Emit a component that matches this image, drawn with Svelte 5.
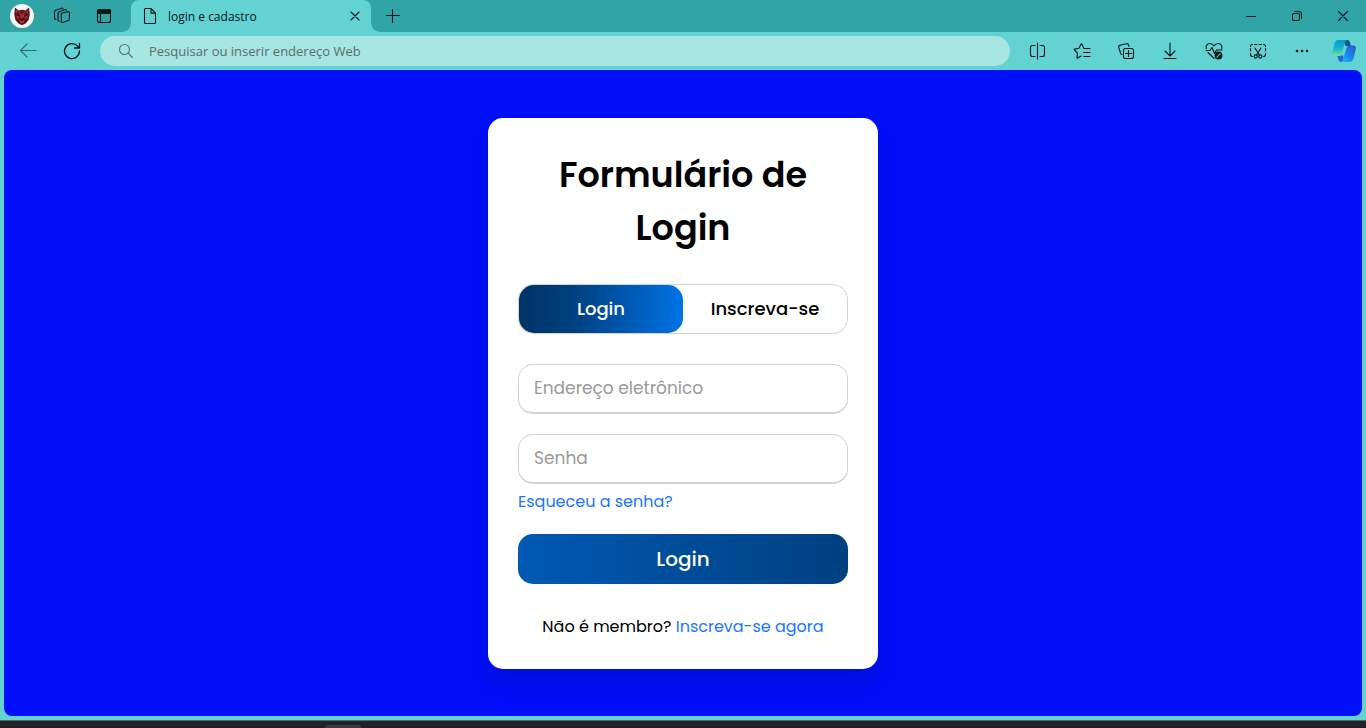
<script>
  let mode = $state('login');
  let address = $state('');
  let email = $state('');
  let password = $state('');
</script>

<div class="browser">
  <header class="titlebar">
    <button class="tool" aria-label="Perfil">
      <svg width="24" height="24" viewBox="0 0 24 24">
        <circle cx="12" cy="12" r="12" fill="#f8f6f5" />
        <path d="M5 3.600 8.600 6.400Q12 5 15.400 6.400L19 3.600 19.800 10.500 18.600 16 15.600 19.400 12 21.200 8.400 19.400 5.400 16 4.200 10.500Z" fill="#5e1a1f" />
        <path d="M6 5.400 8.400 7.600 6.200 9.600ZM18 5.400 15.600 7.600 17.800 9.600ZM9 7.800 12 10.600 15 7.800 14.200 12.400 12 15 9.800 12.400Z" fill="#b3262e" />
        <path d="M6 11.400 9.600 13.200 8 14.400ZM18 11.400 14.400 13.200 16 14.400ZM9.600 16 12 17.400 14.400 16 13.400 19 10.600 19Z" fill="#df2f36" />
        <path d="M10.600 15.200h2.800L12 16.800ZM7 10.400l3 1.600M17 10.400l-3 1.600M9.400 18.600l-2-2.800M14.600 18.600l2-2.800" fill="#17090b" stroke="#17090b" stroke-width=".8" />
      </svg>
    </button>
    <button class="tool" aria-label="Espaços de trabalho">
      <svg class="line" width="18" height="18" viewBox="0 0 18 18">
        <path d="m8.800 6.300 6-1.500q1.600-.3 1.600 1.200v6q0 1.200-1.200 1.500l-5.400 1.900q-1.500.4-1.500-1.100V7.600q0-1 .5-1.300Z" />
        <path d="M6.300 14.200q-1.200 0-1.200-1.300V6.300q0-1.100 1.100-1.600l6-2.200q1-.2 1.400.7" />
        <path d="M3 12.500q-1.500 0-1.500-1.400V5q0-1.200 1.200-1.700L8.600 1.200q1-.3 1.400.5" />
      </svg>
    </button>
    <button class="tool" aria-label="Menu de guias">
      <svg class="line" width="18" height="18" viewBox="0 0 18 18">
        <rect x="2.500" y="2.500" width="13" height="13" rx="2" />
        <path d="M2.500 4q0-1.500 1.500-1.500h10q1.500 0 1.500 1.500v2.500h-13Z" fill="#071718" />
        <path d="M5.500 6v9.500" />
      </svg>
    </button>
    <div class="tab">
      <svg class="line" width="14" height="18" viewBox="0 0 14 18">
        <path d="M1.500 2.500q0-1 1-1H8l4.500 4.600v9.400q0 1-1 1h-9q-1 0-1-1ZM8 1.500v4.600h4.500" />
      </svg>
      <span class="tab-title">login e cadastro</span>
      <button class="tab-close" aria-label="Fechar guia">
        <svg class="line" width="10" height="10" viewBox="0 0 10 10"><path d="m1 1 8 8M9 1 1 9" /></svg>
      </button>
    </div>
    <button class="tool new-tab" aria-label="Nova guia">
      <svg class="line" width="14" height="14" viewBox="0 0 14 14"><path d="M6.500.5v13M.5 6.500h13" /></svg>
    </button>
    <div class="window-buttons">
      <button aria-label="Minimizar">
        <svg class="line" width="10" height="10" viewBox="0 0 10 10"><path d="M.5 5.500h9" /></svg>
      </button>
      <button aria-label="Restaurar">
        <svg class="line" width="10" height="10" viewBox="0 0 10 10">
          <rect x=".5" y="2.500" width="7" height="7" rx="1.500" />
          <path d="M2.500.5H7q2.500 0 2.500 2.500v4.500" />
        </svg>
      </button>
      <button aria-label="Fechar">
        <svg class="line" width="10" height="10" viewBox="0 0 10 10"><path d="m.5.5 9 9M9.500.5l-9 9" /></svg>
      </button>
    </div>
  </header>

  <nav class="toolbar">
    <button class="nav back" aria-label="Voltar">
      <svg class="line" width="18" height="16" viewBox="0 0 18 16"><path d="M17 7.500H1.500M8 1 1.500 7.500 8 14" /></svg>
    </button>
    <button class="nav" aria-label="Atualizar">
      <svg class="line reload" width="18" height="18" viewBox="0 0 18 18"><path d="M16.500 9A7.500 7.500 0 1 1 14.600 4.100L16.300 6M16.500 1.500V6H11.600" /></svg>
    </button>
    <label class="address">
      <svg class="line" width="16" height="16" viewBox="0 0 16 16"><circle cx="6.500" cy="6.500" r="5" /><path d="m10.200 10.200 4.300 4.300" /></svg>
      <input type="text" aria-label="Barra de endereços" placeholder="Pesquisar ou inserir endereço Web" bind:value={address} />
    </label>
    <div class="actions">
      <button aria-label="Dividir tela">
        <svg class="line" width="18" height="18" viewBox="0 0 18 18"><path d="M6 3.500H3.500q-2 0-2 2v7q0 2 2 2H6M11 3.500h2.500q2 0 2 2v7q0 2-2 2H11M8.500 1v16" /></svg>
      </button>
      <button aria-label="Favoritos">
        <svg class="line" width="18" height="18" viewBox="0 0 18 18"><path d="M10.800 6.300 8.900 2.200q-.4-.8-.9 0L5.900 6.300l-4.200.8q-.9.200-.3.900l3.100 3.100-.6 4.500q-.1.900.7.500l3.600-2.100M11 6.500h6M10.500 10.500H17M11 14.500h6" /></svg>
      </button>
      <button aria-label="Coleções">
        <svg class="line" width="18" height="18" viewBox="0 0 18 18">
          <rect x="6.500" y="6.500" width="10" height="10" rx="2" />
          <path d="M11.500 8.500v6M8.500 11.500h6M12 4.500l-.7-2q-.5-1.200-1.800-.8L2.800 3.300Q1.300 3.800 1.700 5.200l1.900 6.200q.4 1 1.400 1.100" />
        </svg>
      </button>
      <button aria-label="Downloads">
        <svg class="line" width="18" height="18" viewBox="0 0 18 18"><path d="M9 1v12.500M4 9l5 5 5-5M3 16.500h12" /></svg>
      </button>
      <button aria-label="Desempenho">
        <svg class="line" width="18" height="18" viewBox="0 0 18 18">
          <path d="M1.200 6.500C.6 3.500 2.500 1.500 4.800 1.500c2 0 3.200 1 4.200 2.400 1-1.400 2.200-2.400 4.200-2.400 2.600 0 4.300 2.400 3.500 5.200M3 10.500l6 5.800M1 8.500h4l2-3 2.500 6 2-3.500H17" />
          <circle cx="13.500" cy="13.500" r="3.900" fill="#071718" stroke="none" />
          <path d="m11.900 15.100 3.200-3.200" stroke="#62d2d3" />
        </svg>
      </button>
      <button aria-label="Captura de tela">
        <svg class="line" width="18" height="18" viewBox="0 0 18 18">
          <path d="M3.500 14.500q-2 0-2-2v-1M1.500 9V6.500M1.500 4.500q0-2 2-2M5.500 2.500H8M10 2.500h2.500M14.500 2.500q2 0 2 2M16.500 6.500V9M16.500 11.500v1q0 2-2 2M6 6l4.500 7.200M12 6l-4.500 7.200" />
          <circle cx="6.700" cy="14.500" r="1.600" /><circle cx="11.300" cy="14.500" r="1.600" />
        </svg>
      </button>
      <button aria-label="Mais opções">
        <svg width="18" height="18" viewBox="0 0 18 18" fill="#071718"><circle cx="4" cy="9" r="1.300" /><circle cx="9" cy="9" r="1.300" /><circle cx="14" cy="9" r="1.300" /></svg>
      </button>
      <button class="copilot" aria-label="Copilot">
        <svg width="24" height="24" viewBox="0 0 24 24">
          <defs>
            <linearGradient id="cop-left" x1="0" y1="0" x2="0" y2="1"><stop offset="0" stop-color="#0697cf" /><stop offset=".5" stop-color="#18b2c9" /><stop offset="1" stop-color="#73e3a1" /></linearGradient>
            <linearGradient id="cop-right" x1="1" y1="0" x2="0" y2="1"><stop offset="0" stop-color="#2754cc" /><stop offset=".6" stop-color="#1590ef" /><stop offset="1" stop-color="#22b4fa" /></linearGradient>
          </defs>
          <path d="M11 1h4.500q1.800 0 2.300 2l1.200 4h-5.500Z" fill="#075a87" />
          <path d="M13 23H9q-1.800 0-2.400-2L5.200 16.500H11Z" fill="#2c65d8" />
          <path d="M6.500 1H15q-1.500.6-2.100 2.800L9.700 14.400Q9 17 6.500 17H3Q-.6 17 .2 13.500L2.700 4Q3.600 1 6.500 1Z" fill="url(#cop-left)" />
          <path d="M17.500 23H9q1.500-.6 2.100-2.800l3.200-11Q15 6.500 17.500 6.500H21q3.600 0 2.800 3.700L21.300 20q-.9 3-3.800 3Z" fill="url(#cop-right)" />
        </svg>
      </button>
    </div>
  </nav>

  <main class="page">
    <section class="card">
      <h1>Formulário de Login</h1>
      <div class="switch">
        <label class:active={mode === 'login'}>
          <input type="radio" name="mode" value="login" bind:group={mode} />Login
        </label>
        <label class:active={mode === 'signup'}>
          <input type="radio" name="mode" value="signup" bind:group={mode} />Inscreva-se
        </label>
      </div>
      <form onsubmit={(e) => e.preventDefault()}>
        <input class="field" type="email" aria-label="Endereço eletrônico" placeholder="Endereço eletrônico" bind:value={email} />
        <input class="field" type="password" aria-label="Senha" placeholder="Senha" bind:value={password} />
        <a class="forgot" href="#senha">Esqueceu a senha?</a>
        <button class="submit" type="submit">Login</button>
        <p>Não é membro? <a href="#cadastro">Inscreva-se agora</a></p>
      </form>
    </section>
  </main>
  <footer class="taskbar"><span></span></footer>
</div>

<style>
  :global(body) { margin: 0; }
  * { box-sizing: border-box; }
  .browser {
    display: flex;
    flex-direction: column;
    min-height: 100vh;
    background: #62d2d3;
    color: #071718;
    font-family: "Segoe UI", "Open Sans", "Noto Sans", sans-serif;
  }
  button {
    display: flex;
    align-items: center;
    justify-content: center;
    padding: 0;
    border: 0;
    background: none;
    color: inherit;
    cursor: pointer;
  }
  svg { display: block; flex: none; }
  .line { fill: none; stroke: #071718; stroke-width: 1.1; stroke-linecap: round; stroke-linejoin: round; }
  .titlebar { display: flex; height: 32px; padding-left: 2px; background: #31a4a8; }
  .tool { width: 40px; }
  .tool:nth-child(3) { width: 44px; }
  .new-tab { width: 44px; }
  .tab {
    position: relative;
    display: flex;
    align-items: center;
    width: 240px;
    margin-left: 5px;
    padding: 0 10px 0 12px;
    border-radius: 8px 8px 0 0;
    background: #62d2d3;
    font-size: 12px;
  }
  .tab::before, .tab::after {
    content: "";
    position: absolute;
    bottom: 0;
    width: 8px;
    height: 8px;
  }
  .tab::before { right: 100%; background: radial-gradient(circle at 0 0, transparent 7px, #62d2d3 8px); }
  .tab::after { left: 100%; background: radial-gradient(circle at 100% 0, transparent 7px, #62d2d3 8px); }
  .tab-title { flex: 1; margin-left: 11px; }
  .tab-close { width: 12px; height: 16px; }
  .window-buttons { display: flex; margin-left: auto; }
  .window-buttons button { width: 46px; }
  .toolbar { display: flex; align-items: center; height: 38px; padding: 0 2px 0 6px; }
  .nav { width: 44px; height: 32px; }
  .back { opacity: .55; }
  .reload { stroke-width: 1.3; }
  .address {
    display: flex;
    flex: 1;
    align-items: center;
    gap: 15px;
    height: 30px;
    margin: 0 6px;
    padding: 0 18px;
    border-radius: 15px;
    background: #a8e6e4;
  }
  .address svg { stroke: #53706f; }
  .address input { flex: 1; min-width: 0; padding: 0; border: 0; outline: 0; background: none; font: 13px "Segoe UI", "Open Sans", "Noto Sans", sans-serif; }
  .address input::placeholder { color: #5d6b6b; opacity: 1; }
  .actions { display: flex; }
  .actions button { width: 44px; height: 32px; }
  .actions .copilot { width: 40px; }
  .page {
    display: flex;
    flex: 1;
    align-items: center;
    justify-content: center;
    margin: 0 4px 4px;
    padding: 40px 16px;
    border-radius: 8px;
    background: #000ff8;
    font-family: Poppins, Inter, sans-serif;
    color: #000;
  }
  .card {
    width: 100%;
    max-width: 390px;
    padding: 30px;
    border-radius: 15px;
    background: #fff;
    box-shadow: 0 15px 20px rgba(0, 0, 0, .1);
  }
  h1 { margin: 0; padding: 0 20px; font-size: 35px; font-weight: 600; line-height: 53px; text-align: center; }
  .switch { display: flex; height: 50px; margin: 30px 0; border: 1px solid lightgrey; border-radius: 15px; }
  .switch label {
    display: flex;
    flex: 1;
    align-items: center;
    justify-content: center;
    border-radius: 15px;
    font-size: 18px;
    font-weight: 500;
    cursor: pointer;
  }
  .switch input { position: absolute; opacity: 0; pointer-events: none; }
  .switch .active { background: linear-gradient(to right, #003366, #004080, #0059b3, #0073e6); color: #fff; }
  form { display: flex; flex-direction: column; }
  .field {
    height: 50px;
    margin: 0 0 20px;
    padding: 0 15px;
    border: 1px solid lightgrey;
    border-bottom-width: 2px;
    border-radius: 15px;
    outline: 0;
    font-family: inherit;
    font-size: 17px;
  }
  .field::placeholder { color: #999; opacity: 1; }
  .field[type="password"] { margin-bottom: 6px; }
  a { color: #1a75ff; text-decoration: none; }
  .forgot { align-self: flex-start; font-size: 16px; line-height: 24px; }
  .submit {
    height: 50px;
    margin-top: 20px;
    border-radius: 15px;
    background: linear-gradient(to right, #0059b3, #004080);
    color: #fff;
    font-family: inherit;
    font-size: 20px;
    font-weight: 500;
  }
  p { margin: 30px 0 0; font-size: 16px; line-height: 25px; text-align: center; }
  .taskbar { height: 8px; padding: 4px 0 0 325px; border-top: 1px solid #55696b; background: #232127; }
  .taskbar span { display: block; width: 36px; height: 3px; border-radius: 4px 4px 0 0; background: #3b3940; }
</style>
